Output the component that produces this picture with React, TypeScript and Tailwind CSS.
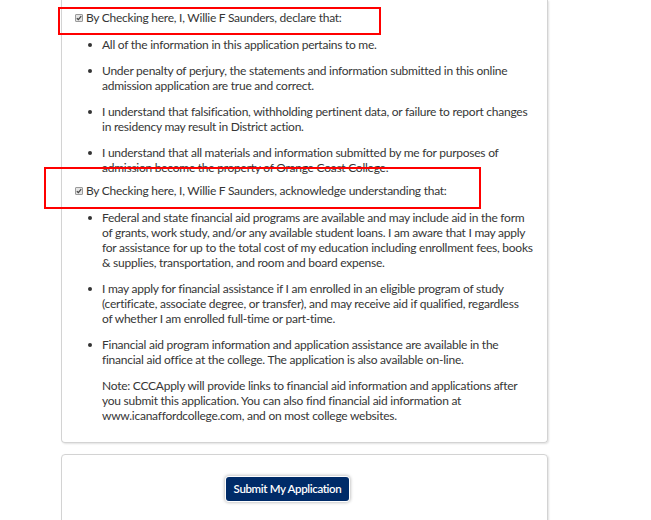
import React from "react";

const Check = () => (
  <span className="w-[8px] h-[8px] shrink-0 border border-[#9a9a9a] bg-[#e4e4e4] rounded-[1px] flex items-center justify-center">
    <svg width="6" height="6" viewBox="0 0 6 6">
      <path d="M0.8 3.2 L2.4 4.6 L5.2 1.2" stroke="#4a4a4a" strokeWidth="1.3" fill="none" />
    </svg>
  </span>
);

const Item = ({ lines, bullet = true, last = false }: { lines: string[]; bullet?: boolean; last?: boolean }) => (
  <li className={`flex ${last ? "" : "mb-[11px]"}`}>
    <span className="w-[40px] shrink-0 flex justify-end pr-[10px] pt-[6px]">
      {bullet && <span className="w-[4px] h-[4px] rounded-full bg-[#333]" />}
    </span>
    <span className="whitespace-nowrap">
      {lines.map((l, i) => (
        <React.Fragment key={i}>
          {l}
          {i < lines.length - 1 && <br />}
        </React.Fragment>
      ))}
    </span>
  </li>
);

export default function App() {
  return (
    <div
      className="relative w-[651px] h-[520px] overflow-hidden bg-white text-[#363636] text-[12px] leading-[15px] tracking-[-0.25px]"
      style={{ fontFamily: "Lato, 'Noto Sans', sans-serif" }}
    >
      <div className="ml-[61px] w-[487px] border-x border-b border-[#d3d3d3] rounded-b-[4px] shadow-[1px_1px_2px_rgba(0,0,0,0.12)] pt-[10px] pb-[19px]">
        <div className="flex items-center gap-[3px] ml-[13px] h-[15px]">
          <Check />
          <span className="whitespace-nowrap">By Checking here, I, Willie F Saunders, declare that:</span>
        </div>
        <ul className="mt-[12px]">
          <Item lines={["All of the information in this application pertains to me."]} />
          <Item
            lines={[
              "Under penalty of perjury, the statements and information submitted in this online",
              "admission application are true and correct.",
            ]}
          />
          <Item
            lines={[
              "I understand that falsification, withholding pertinent data, or failure to report changes",
              "in residency may result in District action.",
            ]}
          />
          <Item
            last
            lines={[
              "I understand that all materials and information submitted by me for purposes of",
              "admission become the property of Orange Coast College.",
            ]}
          />
        </ul>
        <div className="flex items-center gap-[3px] ml-[13px] h-[15px] mt-[8px]">
          <Check />
          <span className="whitespace-nowrap">
            By Checking here, I, Willie F Saunders, acknowledge understanding that:
          </span>
        </div>
        <ul className="mt-[12px]">
          <Item
            lines={[
              "Federal and state financial aid programs are available and may include aid in the form",
              "of grants, work study, and/or any available student loans. I am aware that I may apply",
              "for assistance for up to the total cost of my education including enrollment fees, books",
              "& supplies, transportation, and room and board expense.",
            ]}
          />
          <Item
            lines={[
              "I may apply for financial assistance if I am enrolled in an eligible program of study",
              "(certificate, associate degree, or transfer), and may receive aid if qualified, regardless",
              "of whether I am enrolled full-time or part-time.",
            ]}
          />
          <Item
            lines={[
              "Financial aid program information and application assistance are available in the",
              "financial aid office at the college. The application is also available on-line.",
            ]}
          />
          <Item
            last
            bullet={false}
            lines={[
              "Note: CCCApply will provide links to financial aid information and applications after",
              "you submit this application. You can also find financial aid information at",
              "www.icanaffordcollege.com, and on most college websites.",
            ]}
          />
        </ul>
      </div>

      <div className="ml-[61px] mt-[11px] w-[487px] h-[120px] border border-[#d3d3d3] rounded-t-[4px] shadow-[1px_1px_2px_rgba(0,0,0,0.12)] pt-[22px]">
        <button className="ml-[164px] w-[123px] h-[24px] rounded-[3px] bg-[#002b68] text-white text-[11.5px] font-semibold leading-[24px] tracking-[-0.35px] shadow-[0_0_0_1px_#ffffff,0_0_3px_2px_rgba(0,0,0,0.22)] whitespace-nowrap flex items-center justify-center">
          Submit My Application
        </button>
      </div>

      <div className="absolute left-[58px] top-[7px] w-[323px] h-[28px] border-2 border-[#ff0000] pointer-events-none" />
      <div className="absolute left-[44px] top-[167px] w-[437px] h-[42px] border-2 border-[#ff0000] pointer-events-none" />
    </div>
  );
}
